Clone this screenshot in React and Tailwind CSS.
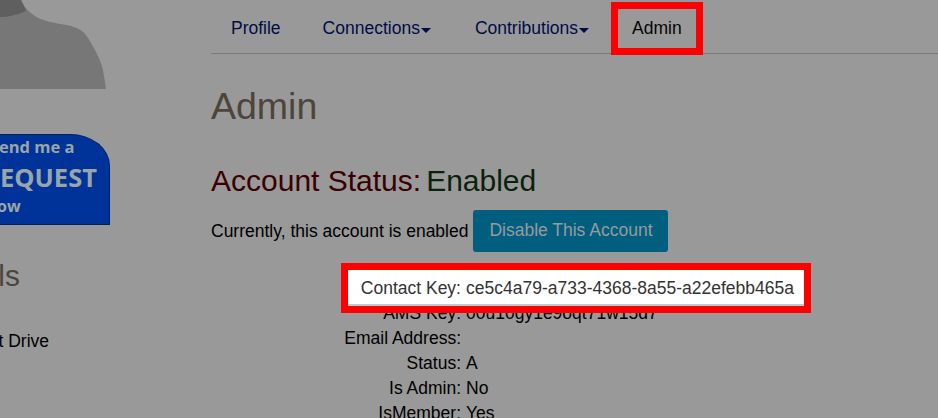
const rows = [
  ["AMS Key:", "00u10gy1e9oqt71w15d7"],
  ["Email Address:", ""],
  ["Status:", "A"],
  ["Is Admin:", "No"],
  ["IsMember:", "Yes"],
];

function Caret({ color }) {
  return (
    <svg width="10" height="5" viewBox="0 0 10 5" className="ml-[1px] mt-[3px]">
      <path d="M0 0H10L5 5Z" fill={color} />
    </svg>
  );
}

function NavItem({ children, caret, className }) {
  return (
    <div className={`flex items-center h-[53px] pt-[4px] ${className}`}>
      <span>{children}</span>
      {caret && <Caret color="#000d45" />}
    </div>
  );
}

export default function App() {
  return (
    <div
      className="w-[938px] h-[418px] overflow-hidden flex bg-[#999999] text-[17.5px] text-black"
      style={{ fontFamily: '"Liberation Sans", Arial, sans-serif' }}
    >
      <aside className="w-[211px] shrink-0 flex flex-col">
        <svg width="106" height="89" viewBox="0 0 106 89" className="block shrink-0">
          <path d="M0 0H21C24 6 27 11 35 16C42 21 55 23 66 25C78 27 84 31 88 38C94 48 100 58 103 70C104 76 105 83 106 89H0Z" fill="#777777" />
          <path d="M0 0H21C23 4 25 8 26 11C17 15 8 17 0 17Z" fill="#5f5f5f" />
        </svg>
        <div className="mt-[45px] w-[110px] h-[91px] bg-[#003399] border-b border-r border-t border-[#00205f] rounded-tr-[40px_32px] text-[#9aa5a8] overflow-hidden flex flex-col items-start font-bold"
          style={{ fontFamily: '"Open Sans", sans-serif' }}
        >
          <div className="-ml-[1px] text-[16.5px] leading-[24px] whitespace-nowrap">end me a</div>
          <div className="ml-[0px] mt-[2px] text-[25.5px] leading-[32px] whitespace-nowrap">EQUEST</div>
          <div className="-ml-[3px] text-[16px] leading-[26px] whitespace-nowrap">ow</div>
        </div>
        <div className="mt-[33px] w-[20px] flex justify-end text-[30px] leading-[36px] text-[#4d453c] whitespace-nowrap">Details</div>
        <div className="mt-[35px] w-[49px] flex justify-end leading-[24px] whitespace-nowrap">First Drive</div>
      </aside>

      <main className="flex-1 min-w-0">
        <nav className="h-[54px] border-b border-[#7a7a7a] flex pl-[20px] text-[#000d45]">
          <NavItem>Profile</NavItem>
          <NavItem caret className="ml-[42px]">Connections</NavItem>
          <NavItem caret className="ml-[44px]">Contributions</NavItem>
          <div className="relative ml-[43px] h-[53px] pt-[4px] flex items-center text-[#050505]">
            Admin
            <div className="absolute left-[-21px] right-[-21px] top-[2px] h-[53px] border-[7px] border-[#ff0000]" />
          </div>
        </nav>

        <h1 className="mt-[31px] text-[37.5px] leading-[42px] text-[#4d453c]">Admin</h1>

        <h2 className="mt-[36px] text-[30px] leading-[36px] text-[#3a0000] flex">
          <span>Account Status:</span>
          <span className="ml-[5px] text-[#0a220c]">Enabled</span>
        </h2>

        <div className="mt-[11px] flex items-center">
          <span>Currently, this account is enabled</span>
          <button className="ml-[5px] h-[42px] w-[195px] pb-[1px] rounded-[3px] bg-[#005f7f] text-[#9a9a9a] text-[17.5px]">
            Disable This Account
          </button>
        </div>

        <div className="mt-[18px] w-[456px] ml-[137px] h-[36px] pt-[3px] relative z-10 bg-white border-b-2 border-[#c8c8c8] outline-[7px] outline-solid outline-[#ff0000] flex items-center text-[#333333]">
          <span className="w-[113px] text-right">Contact Key:</span>
          <span className="ml-[5px] whitespace-nowrap">ce5c4a79-a733-4368-8a55-a22efebb465a</span>
        </div>

        <div className="-mt-[5px]">
          {rows.map(([k, v]) => (
            <div key={k} className="flex h-[25px] items-center">
              <span className="w-[250px] text-right">{k}</span>
              <span className="ml-[5px]">{v}</span>
            </div>
          ))}
        </div>
      </main>
    </div>
  );
}
